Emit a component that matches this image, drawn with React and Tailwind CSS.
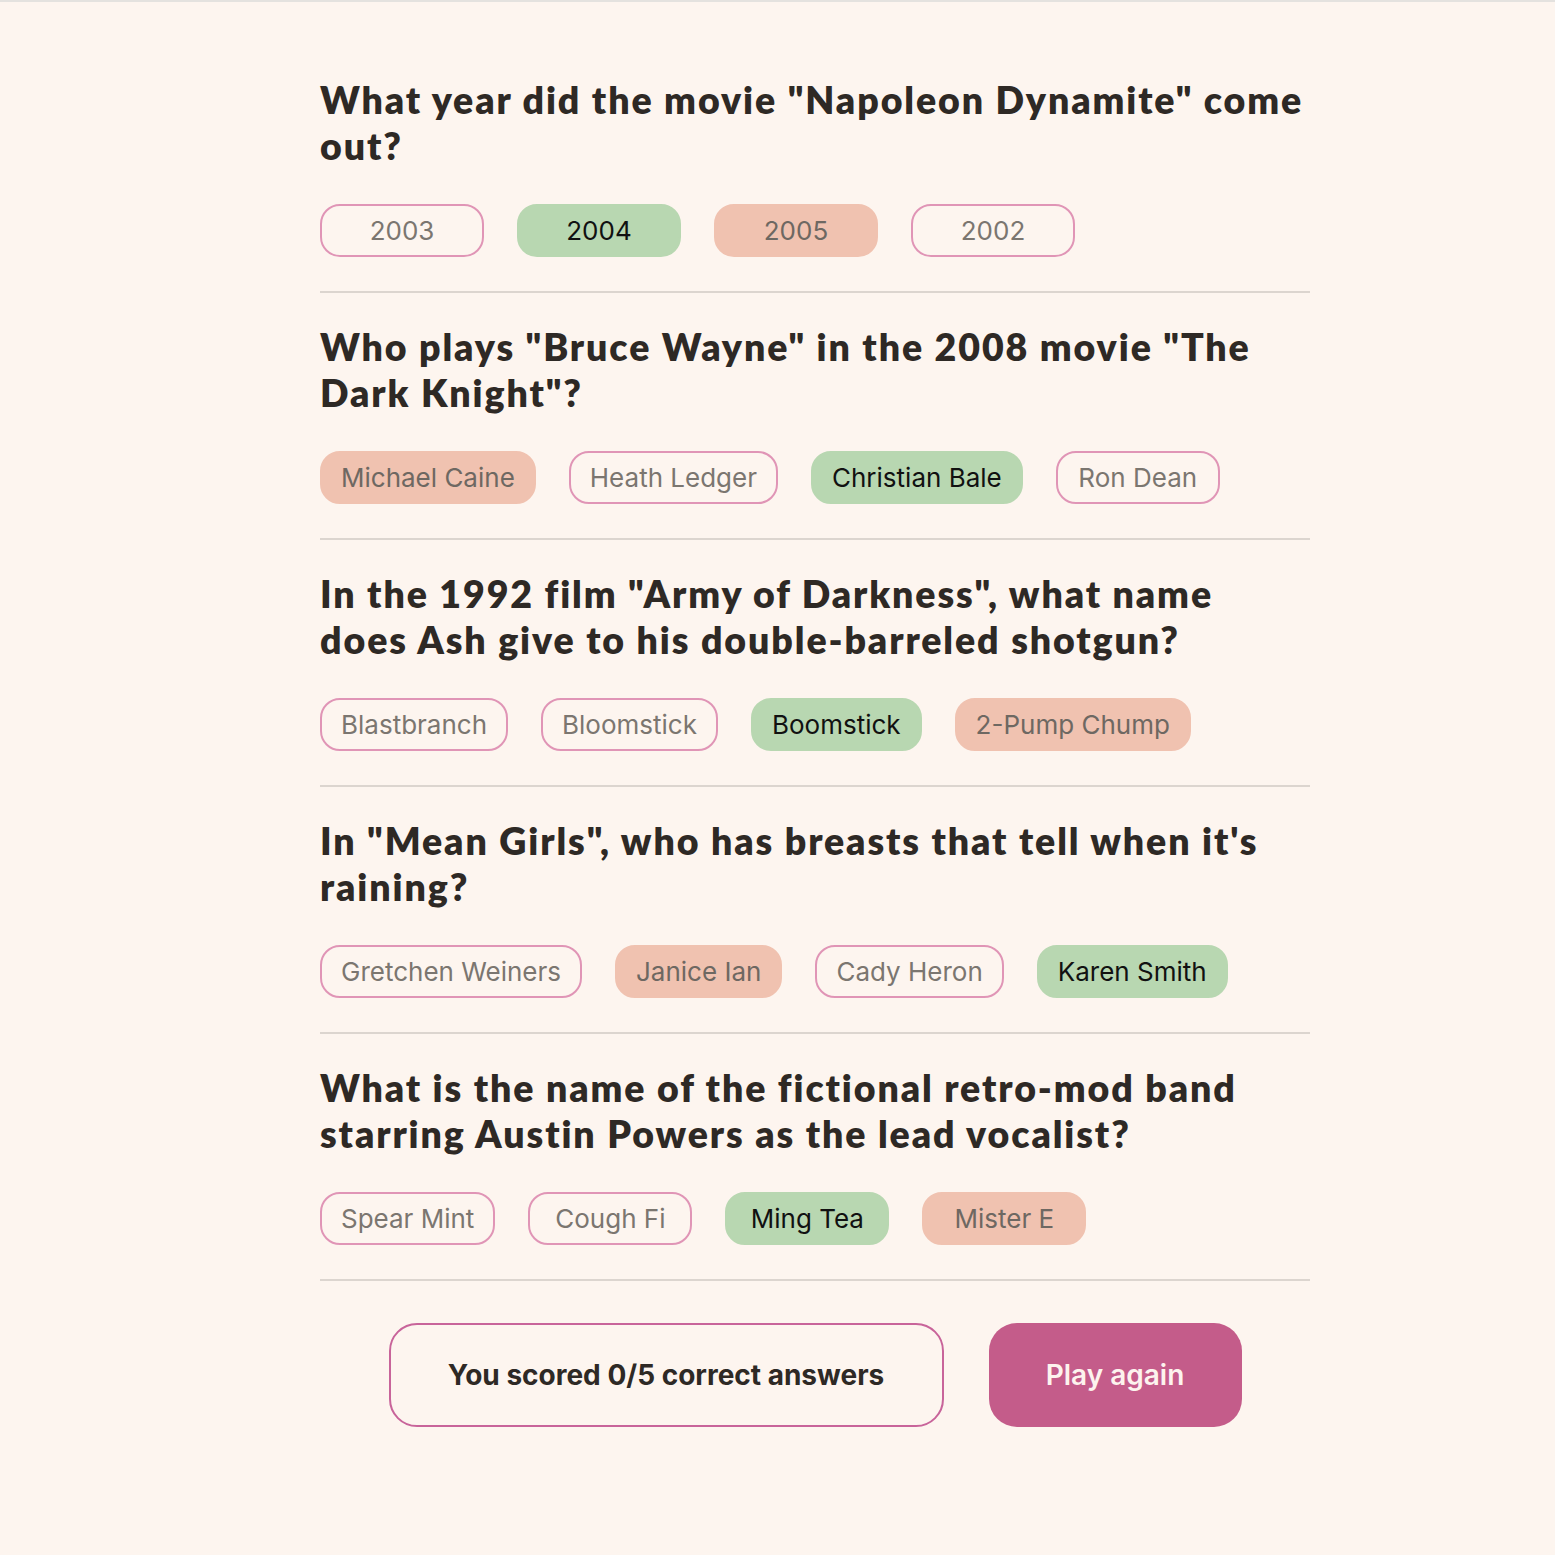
const questions = [
  {
    lines: ['What year did the movie "Napoleon Dynamite" come', 'out?'],
    answers: [
      { t: '2003', s: 'none' },
      { t: '2004', s: 'correct' },
      { t: '2005', s: 'wrong' },
      { t: '2002', s: 'none' },
    ],
  },
  {
    lines: ['Who plays "Bruce Wayne" in the 2008 movie "The', 'Dark Knight"?'],
    answers: [
      { t: 'Michael Caine', s: 'wrong' },
      { t: 'Heath Ledger', s: 'none' },
      { t: 'Christian Bale', s: 'correct' },
      { t: 'Ron Dean', s: 'none' },
    ],
  },
  {
    lines: ['In the 1992 film "Army of Darkness", what name', 'does Ash give to his double-barreled shotgun?'],
    answers: [
      { t: 'Blastbranch', s: 'none' },
      { t: 'Bloomstick', s: 'none' },
      { t: 'Boomstick', s: 'correct' },
      { t: '2-Pump Chump', s: 'wrong' },
    ],
  },
  {
    lines: ['In "Mean Girls", who has breasts that tell when it\'s', 'raining?'],
    answers: [
      { t: 'Gretchen Weiners', s: 'none' },
      { t: 'Janice Ian', s: 'wrong' },
      { t: 'Cady Heron', s: 'none' },
      { t: 'Karen Smith', s: 'correct' },
    ],
  },
  {
    lines: ['What is the name of the fictional retro-mod band', 'starring Austin Powers as the lead vocalist?'],
    answers: [
      { t: 'Spear Mint', s: 'none' },
      { t: 'Cough Fi', s: 'none' },
      { t: 'Ming Tea', s: 'correct' },
      { t: 'Mister E', s: 'wrong' },
    ],
  },
];

function Answer({ t, s }) {
  const base =
    'h-[53px] min-w-[164px] px-[19px] rounded-[20px] flex items-center justify-center text-[26px] leading-none whitespace-nowrap';
  if (s === 'correct')
    return <div className={base + ' bg-[#b8d7b1] text-[#111111] border-2 border-[#b8d7b1]'}>{t}</div>;
  if (s === 'wrong')
    return <div className={base + ' bg-[#f0c2b0] text-[#6e6862] border-2 border-[#f0c2b0]'}>{t}</div>;
  return <div className={base + ' border-2 border-[#e095b6] text-[#7b7670]'}>{t}</div>;
}

export default function App() {
  return (
    <div
      className="min-h-[1555px] bg-[#fdf5ef] border-t-2 border-[#e4e2df]"
      style={{ fontFamily: 'Inter, "Liberation Sans", sans-serif' }}
    >
      <div className="ml-[320px] w-[990px] pt-[75px]">
        {questions.map((q, i) => (
          <div key={i} className="border-b-2 border-[#dcd5cf] pb-[34px] mb-[31px]">
            <h2
              className="text-[#2e2925] font-extrabold text-[37.5px] leading-[46px] whitespace-nowrap tracking-[1.9px]"
              style={{ fontFamily: 'Lato, "Noto Sans", sans-serif' }}
            >
              {q.lines[0]}
              <br />
              {q.lines[1]}
            </h2>
            <div className="flex gap-[33px] mt-[35px]">
              {q.answers.map((a) => (
                <Answer key={a.t} {...a} />
              ))}
            </div>
          </div>
        ))}
        <div className="flex justify-center gap-[45px] mt-[42px]">
          <div className="w-[555px] h-[104px] rounded-[28px] border-2 border-[#c8649a] flex items-center justify-center text-[28px] font-bold text-[#2e2925]">
            You scored 0/5 correct answers
          </div>
          <button className="w-[253px] h-[104px] rounded-[28px] bg-[#c45c8a] flex items-center justify-center text-[28px] font-semibold text-[#fdf3ee]">
            Play again
          </button>
        </div>
      </div>
    </div>
  );
}
